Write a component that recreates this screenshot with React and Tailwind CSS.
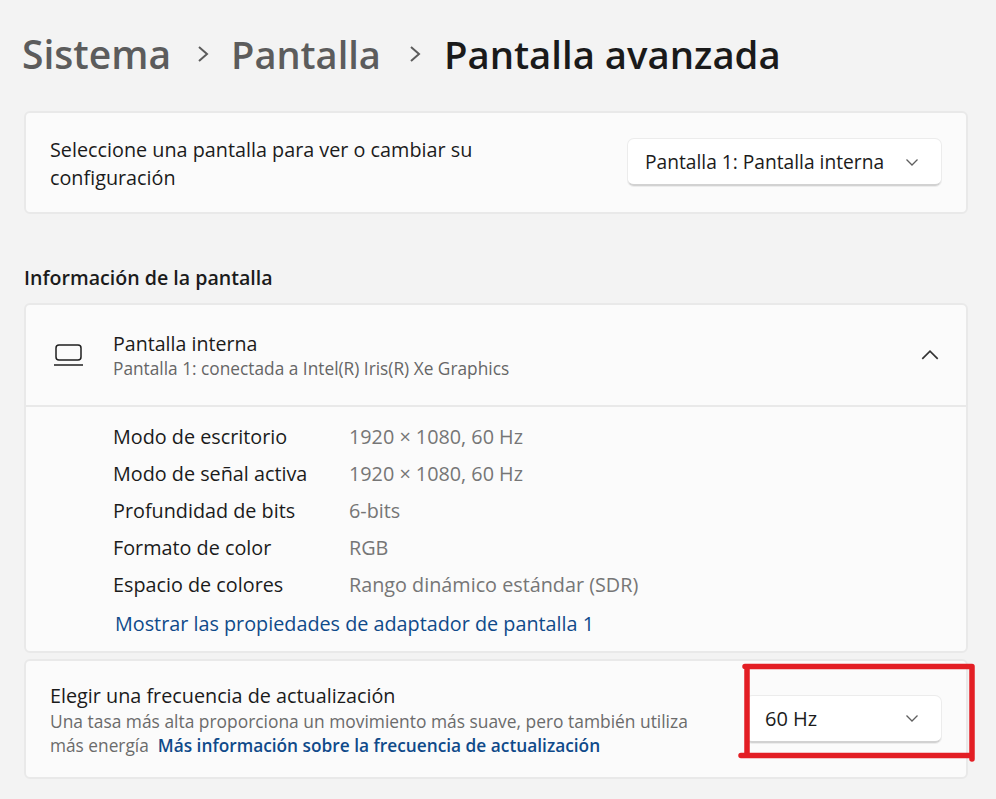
import React from 'react';

const font = { fontFamily: '"Open Sans", sans-serif' };

const rows = [
  ['Modo de escritorio', '1920 × 1080, 60 Hz'],
  ['Modo de señal activa', '1920 × 1080, 60 Hz'],
  ['Profundidad de bits', '6-bits'],
  ['Formato de color', 'RGB'],
  ['Espacio de colores', 'Rango dinámico estándar (SDR)'],
];

const Crumb = ({ className }) => (
  <svg width="14" height="18" viewBox="0 0 14 18" fill="none" stroke="#5c5c5c" strokeWidth="2" className={`mt-[19px] shrink-0 ${className}`}>
    <path d="M2 2l8 7-8 7" />
  </svg>
);

const Chevron = ({ up, size = 14, color = '#5f5f5f' }) => (
  <svg width={size} height={size} viewBox="0 0 14 14" fill="none" stroke={color} strokeWidth="1.3">
    <path d={up ? 'M1 10l6-6 6 6' : 'M1.5 4.5L7 10l5.5-5.5'} />
  </svg>
);

const Card = ({ className, children }) => (
  <div className={`mx-6 w-[944px] rounded-md border-2 border-[#e9e9e9] bg-[#fbfbfb] ${className}`}>{children}</div>
);

const Select = ({ label, className, textClass }) => (
  <div className={`flex h-[47px] items-center justify-between rounded-md border-b-2 border-[#d2d2d2] bg-white shadow-[0_0_0_1px_#ececec] ${className}`}>
    <span className={`pt-[2px] text-[#1b1b1b] ${textClass}`}>{label}</span>
    <Chevron />
  </div>
);

export default function App() {
  return (
    <div className="relative h-[799px] w-[996px] overflow-hidden bg-[#f3f3f3]" style={font}>
      <div className="flex h-[111px] items-start pl-[22px] pt-[26px] font-semibold leading-[56px]">
        <span className="text-[39px] text-[#5c5c5c]">Sistema</span>
        <Crumb className="ml-[26px] mr-[20px]" />
        <span className="text-[38px] text-[#5c5c5c]">Pantalla</span>
        <Crumb className="ml-[28px] mr-[21px]" />
        <span className="text-[38.3px] text-[#1a1a1a]">Pantalla avanzada</span>
      </div>

      <Card className="flex h-[103px] items-center justify-between pl-6 pr-[25px]">
        <p className="w-[470px] pt-[3px] text-[19.8px] leading-[28px] text-[#1b1b1b]">
          Seleccione una pantalla para ver o cambiar su configuración
        </p>
        <Select label="Pantalla 1: Pantalla interna" textClass="text-[19.2px]" className="w-[313px] pl-[17px] pr-[22px]" />
      </Card>

      <h2 className="ml-6 mt-[50px] text-[19.6px] font-semibold leading-[28px] text-[#1b1b1b]">Información de la pantalla</h2>

      <Card className="mt-[11px] h-[350px]">
        <div className="flex h-[102px] items-center border-b-2 border-[#e9e9e9] pl-[27px] pr-[27px]">
          <svg width="31" height="24" viewBox="0 0 31 24" fill="none" stroke="#1f1f1f" strokeWidth="1.5" className="shrink-0">
            <rect x="3" y="2" width="25" height="15" rx="3" />
            <path d="M1 22h29" />
          </svg>
          <div className="ml-[29px] flex-1 pb-[2px]">
            <div className="text-[19.6px] leading-[28px] text-[#1b1b1b]">Pantalla interna</div>
            <div className="text-[17.3px] leading-[21px] text-[#666]">Pantalla 1: conectada a Intel(R) Iris(R) Xe Graphics</div>
          </div>
          <Chevron up size={18} color="#333" />
        </div>
        <div className="pl-[87px] pt-[11px]">
          {rows.map(([k, v]) => (
            <div key={k} className="flex h-[37px] items-center text-[19.8px]">
              <span className="w-[236px] text-[#1b1b1b]">{k}</span>
              <span className="text-[#767676]">{v}</span>
            </div>
          ))}
          <a className="ml-[2px] mt-[4px] block text-[19.8px] leading-[34px] text-[#0f4a8a]">Mostrar las propiedades de adaptador de pantalla 1</a>
        </div>
      </Card>

      <Card className="mt-[6px] flex h-[120px] items-center justify-between pl-6 pr-[25px]">
        <div className="pt-[3px]">
          <div className="text-[19.8px] leading-[26px] text-[#1b1b1b]">Elegir una frecuencia de actualización</div>
          <div className="text-[17.4px] leading-[24px] text-[#6b6b6b]">Una tasa más alta proporciona un movimiento más suave, pero también utiliza</div>
          <div className="flex text-[17.3px] leading-[25px]">
            <span className="text-[#6b6b6b]">más energía</span>
            <a className="ml-[9px] font-semibold text-[#0f4a8a]">Más información sobre la frecuencia de actualización</a>
          </div>
        </div>
        <Select label="60 Hz" textClass="text-[20px]" className="w-[195px] pl-[19px] pr-[22px]" />
      </Card>

      {/* anotacion roja encima de la captura */}
      <svg width="996" height="799" className="pointer-events-none absolute left-0 top-0" fill="none" stroke="#e31e24" strokeWidth="5.5" strokeLinecap="round">
        <path d="M745 666.5H972M972 666.5V759M972 755.5H741M747 668V755" />
      </svg>
    </div>
  );
}
